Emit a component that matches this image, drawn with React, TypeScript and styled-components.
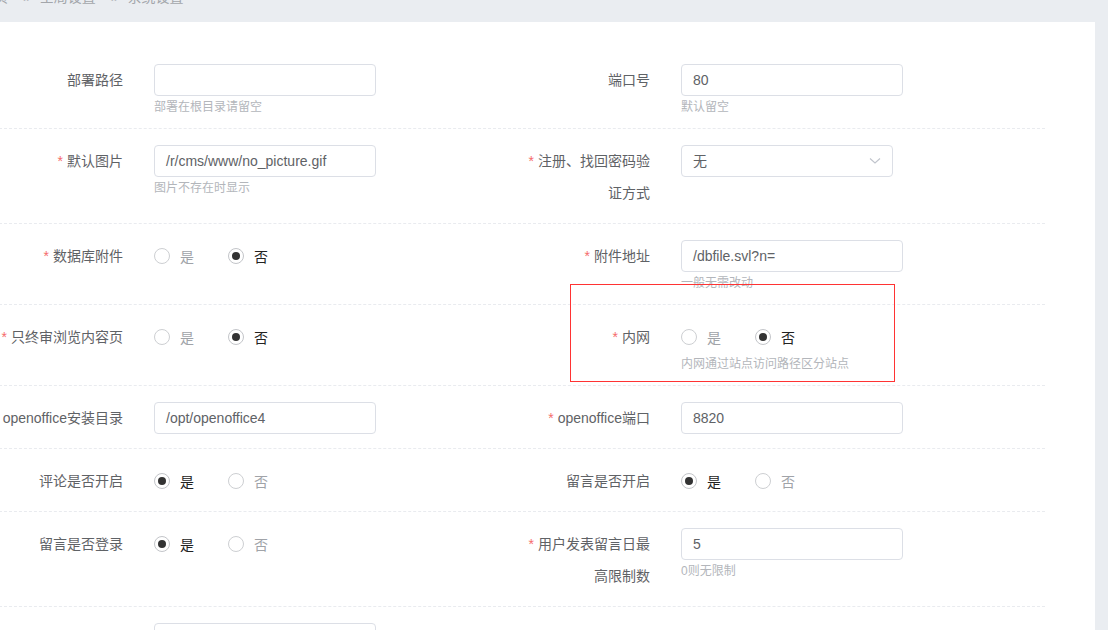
import React from "react";
import styled, { createGlobalStyle } from "styled-components";

const Global = createGlobalStyle`
  html, body { margin: 0; padding: 0; }
  body {
    background: #eaedf1;
    overflow: hidden;
    font-family: "Liberation Sans", "Noto Sans CJK SC", sans-serif;
    font-size: 14px;
    color: #606266;
  }
  * { box-sizing: border-box; }
`;

const Page = styled.div`
  margin: -30px 0 0 -20px;
  width: 1140px;
`;

const Breadcrumb = styled.div`
  height: 52px;
  padding-top: 17px;
  line-height: 20px;
  font-size: 14px;
  color: #a3a6ab;
  white-space: nowrap;
`;

const Sep = styled.span`
  margin: 0 9px 0 15px;
  color: #b5b8bd;
`;

const Card = styled.div`
  position: relative;
  width: 1115px;
  min-height: 700px;
  background: #fff;
  padding: 26px 0 0 14px;
`;

const Row = styled.div`
  display: flex;
  width: 1051px;
  padding: 16px 0 14px;
  border-bottom: 1px dashed #e9ebef;
`;

const Field = styled.div`
  width: 527px;
  flex: none;
  display: flex;
  align-items: flex-start;
`;

const Label = styled.div`
  width: 160px;
  flex: none;
  padding-right: 31px;
  text-align: right;
  line-height: 32px;
  font-size: 14px;
  color: #5f6266;
`;

const Star = styled.span`
  color: #f56c6c;
  margin-right: 4px;
`;

const Content = styled.div`
  display: flex;
  flex-direction: column;
`;

const TextInput = styled.div<{ $w?: number }>`
  width: ${(p) => p.$w ?? 222}px;
  height: 32px;
  border: 1px solid #dcdfe6;
  border-radius: 4px;
  padding: 0 11px;
  line-height: 30px;
  font-size: 14px;
  color: #606266;
  display: flex;
  align-items: center;
  justify-content: space-between;
  white-space: nowrap;
`;

const Help = styled.div`
  padding-top: 4px;
  line-height: 14px;
  font-size: 12px;
  color: #b3b6bb;
  white-space: nowrap;
`;

const RadioGroup = styled.div`
  height: 32px;
  display: flex;
  align-items: center;
`;

const RadioItem = styled.div`
  display: flex;
  align-items: center;
  margin-right: 34px;
`;

const Circle = styled.span<{ $on: boolean }>`
  width: 16px;
  height: 16px;
  border-radius: 50%;
  border: 1px solid ${(p) => (p.$on ? "#c3c5c9" : "#cdcfd2")};
  background: #fff;
  display: flex;
  align-items: center;
  justify-content: center;
  &::after {
    content: "";
    width: 8px;
    height: 8px;
    border-radius: 50%;
    background: ${(p) => (p.$on ? "#333" : "transparent")};
  }
`;

const RadioText = styled.span<{ $on: boolean }>`
  padding-left: 10px;
  font-size: 14px;
  color: ${(p) => (p.$on ? "#222" : "#a0a3a8")};
`;

const Highlight = styled.div`
  position: absolute;
  left: 590px;
  top: 262px;
  width: 325px;
  height: 98px;
  border: 1px solid #f33;
  pointer-events: none;
`;

type FieldDef = {
  label: string;
  required?: boolean;
  type: "input" | "select" | "radio" | "none";
  value?: string;
  yes?: boolean;
  help?: string;
};

const rows: FieldDef[][] = [
  [
    { label: "部署路径", type: "input", value: "", help: "部署在根目录请留空" },
    { label: "端口号", type: "input", value: "80", help: "默认留空" },
  ],
  [
    { label: "默认图片", required: true, type: "input", value: "/r/cms/www/no_picture.gif", help: "图片不存在时显示" },
    { label: "注册、找回密码验证方式", required: true, type: "select", value: "无" },
  ],
  [
    { label: "数据库附件", required: true, type: "radio", yes: false },
    { label: "附件地址", required: true, type: "input", value: "/dbfile.svl?n=", help: "一般无需改动" },
  ],
  [
    { label: "只终审浏览内容页", required: true, type: "radio", yes: false },
    { label: "内网", required: true, type: "radio", yes: false, help: "内网通过站点访问路径区分站点" },
  ],
  [
    { label: "openoffice安装目录", type: "input", value: "/opt/openoffice4" },
    { label: "openoffice端口", required: true, type: "input", value: "8820" },
  ],
  [
    { label: "评论是否开启", type: "radio", yes: true },
    { label: "留言是否开启", type: "radio", yes: true },
  ],
  [
    { label: "留言是否登录", type: "radio", yes: true },
    { label: "用户发表留言日最高限制数", required: true, type: "input", value: "5", help: "0则无限制" },
  ],
  [
    { label: "附件大小限制", type: "input", value: "" },
    { label: "", type: "none" },
  ],
];

const Chevron = () => (
  <svg width="12" height="8" viewBox="0 0 12 8" fill="none">
    <polyline points="1,1.5 6,6 11,1.5" stroke="#c0c4cc" strokeWidth="1.1" />
  </svg>
);

function Radio({ on, text }: { on: boolean; text: string }) {
  return (
    <RadioItem>
      <Circle $on={on} />
      <RadioText $on={on}>{text}</RadioText>
    </RadioItem>
  );
}

function FormField({ f }: { f: FieldDef }) {
  return (
    <Field>
      <Label>
        {f.required && <Star>*</Star>}
        {f.label}
      </Label>
      <Content>
        {f.type === "input" && <TextInput>{f.value}</TextInput>}
        {f.type === "select" && (
          <TextInput $w={212}>
            <span>{f.value}</span>
            <Chevron />
          </TextInput>
        )}
        {f.type === "radio" && (
          <RadioGroup>
            <Radio on={!!f.yes} text="是" />
            <Radio on={!f.yes} text="否" />
          </RadioGroup>
        )}
        {f.help && <Help>{f.help}</Help>}
      </Content>
    </Field>
  );
}

export default function App() {
  return (
    <>
      <Global />
      <Page>
        <Breadcrumb>
          首页<Sep>»</Sep>全局设置<Sep>»</Sep>系统设置
        </Breadcrumb>
        <Card>
          {rows.map((r, i) => (
            <Row key={i}>
              {r.map((f, j) => (
                <FormField key={j} f={f} />
              ))}
            </Row>
          ))}
          <Highlight />
        </Card>
      </Page>
    </>
  );
}
